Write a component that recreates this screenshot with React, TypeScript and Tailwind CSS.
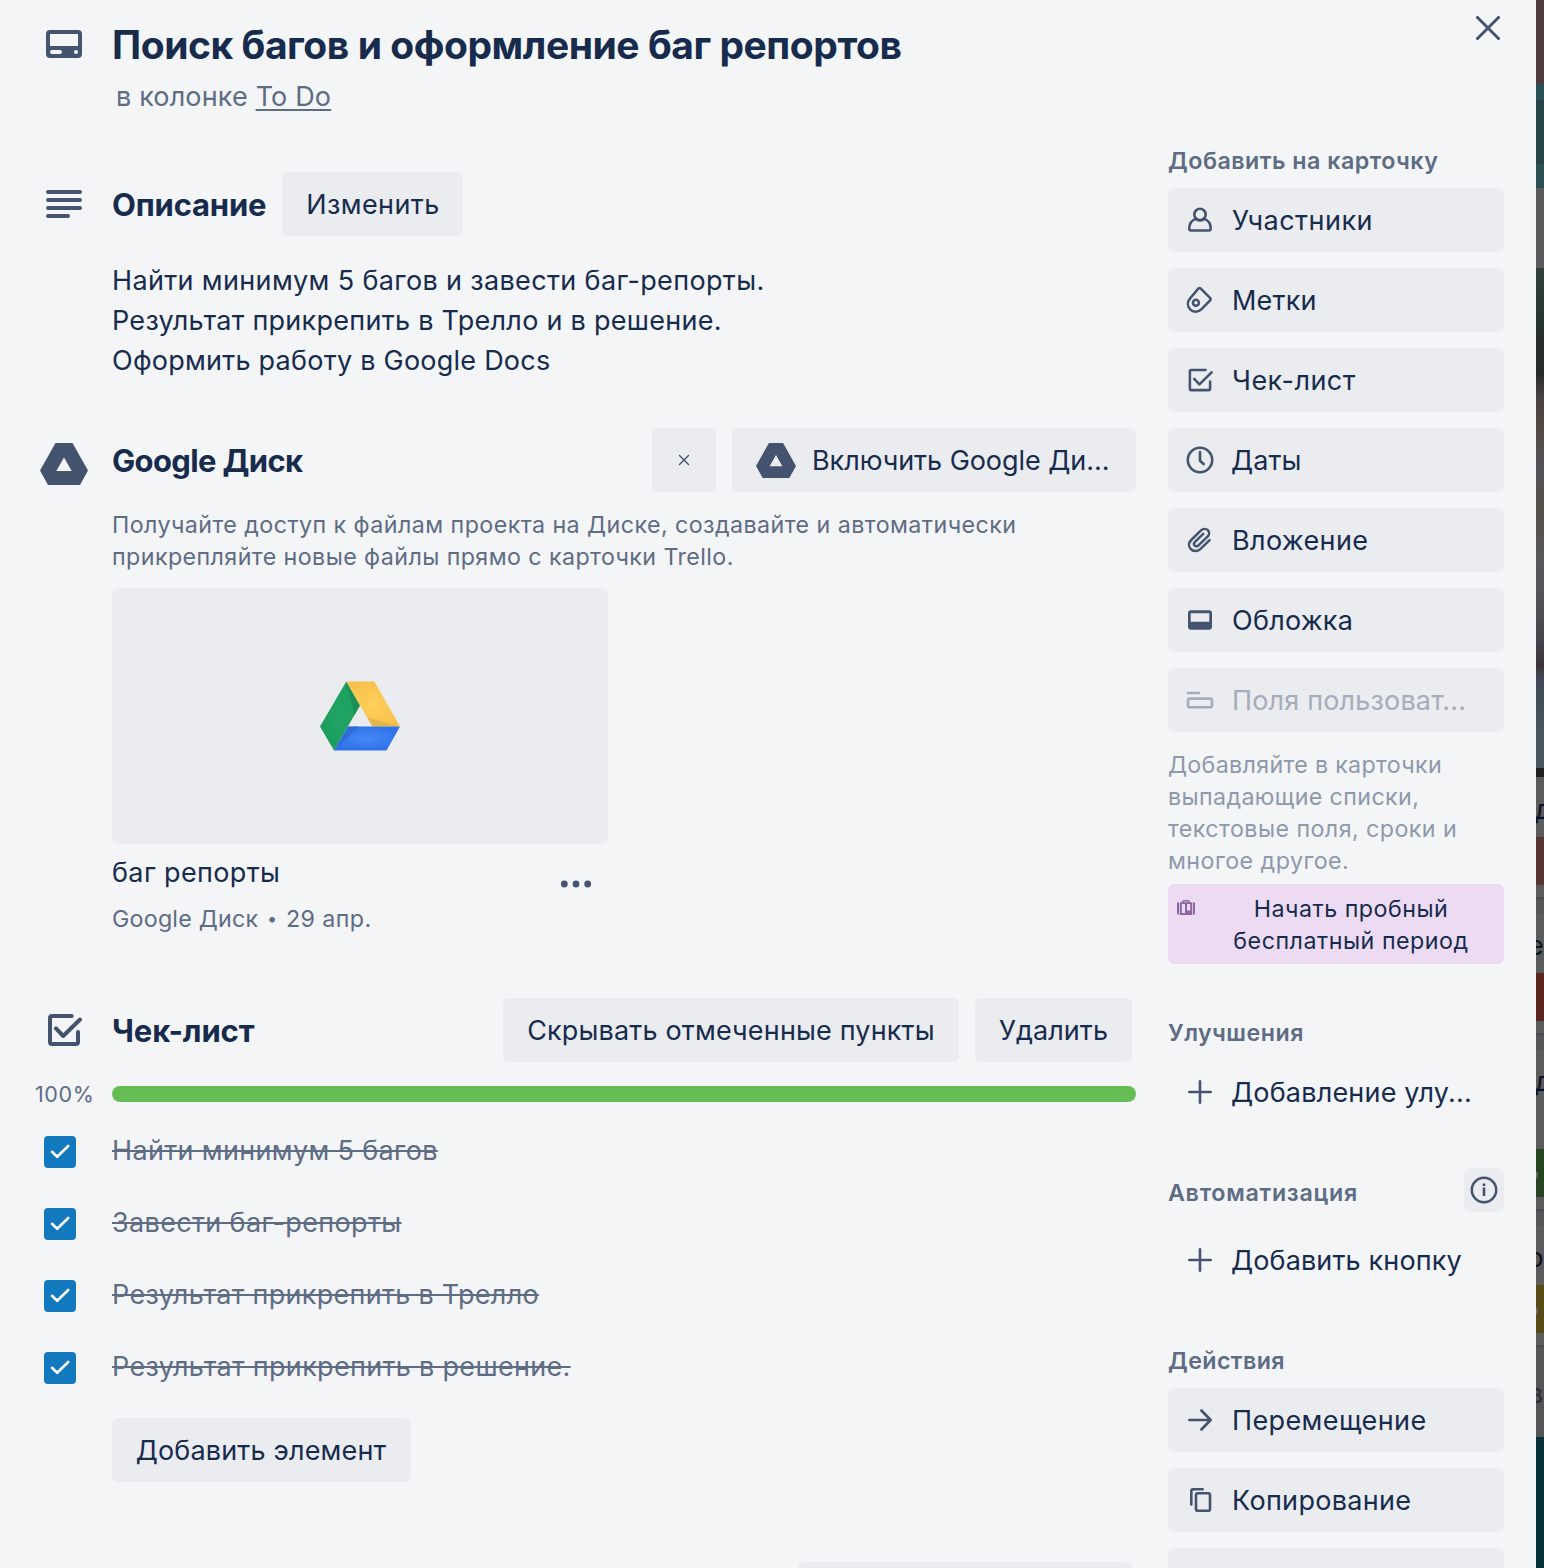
import type { ReactNode } from "react";

const strip: { h: string; glyph?: string; pos?: string; dot?: boolean }[] = [
  { h: "h-[84px] bg-[#503c3f]" },
  { h: "h-[16px] bg-[#2a5056]" },
  { h: "h-[64px] bg-[#24444a]" },
  { h: "h-[24px] bg-[#2a5053]" },
  { h: "h-[80px] bg-[#5a5a5c]" },
  { h: "h-[500px] bg-[linear-gradient(180deg,#33403a_0px,#283833_40px,#272f2e_70px,#262b2a_105px,#4a4240_130px,#524844_160px,#55535a_200px,#54504a_240px,#58575a_290px,#535156_340px,#43424a_375px,#3c3539_398px,#3f4854_410px,#4a5562_460px,#4b5663_500px)]" },
  { h: "h-[9px] bg-[#202020]" },
  { h: "h-[60px] bg-[#5b5b5b]", glyph: "д", pos: "-left-px top-[13px]" },
  { h: "h-[48px] bg-[#583532]" },
  { h: "h-[12px] bg-[#5b5b5b]" },
  { h: "h-[2px] bg-[#48494d]" },
  { h: "h-[14px] bg-[#555558]" },
  { h: "h-[60px] bg-[#5b5b5b]", glyph: "е", pos: "-left-[8px] top-[13px]" },
  { h: "h-[48px] bg-[#58241b]" },
  { h: "h-[12px] bg-[#5b5b5b]" },
  { h: "h-[2px] bg-[#48494d]" },
  { h: "h-[14px] bg-[#555558]" },
  { h: "h-[100px] bg-[#5b5b5b]", glyph: "д", pos: "-left-px top-[13px]" },
  { h: "h-[48px] bg-[#24451f]", dot: true },
  { h: "h-[12px] bg-[#5b5b5b]" },
  { h: "h-[2px] bg-[#48494d]" },
  { h: "h-[14px] bg-[#555558]" },
  { h: "h-[60px] bg-[#5b5b5b]", glyph: "р", pos: "-left-[9px] top-[13px]" },
  { h: "h-[48px] bg-[#594b15]", dot: true },
  { h: "h-[12px] bg-[#5b5b5b]" },
  { h: "h-[2px] bg-[#48494d]" },
  { h: "h-[90px] bg-[#555558]", glyph: "в", pos: "-left-[8px] top-[27px] opacity-60" },
  { h: "h-[131px] bg-[#06303a]" },
];

function BoardEdge() {
  return (
    <div className="flex w-2 flex-col overflow-hidden">
      {strip.map((s, i) => (
        <div key={i} className={`relative shrink-0 overflow-hidden ${s.h}`}>
          {s.glyph && (
            <span className={`absolute text-[27px] leading-[40px] text-[#0c1424] ${s.pos}`}>{s.glyph}</span>
          )}
          {s.dot && <span className="absolute -left-2 top-[21px] h-[10px] w-[10px] rounded-full bg-[#696b6b]" />}
        </div>
      ))}
    </div>
  );
}

const S = { fill: "none", stroke: "currentColor", strokeLinecap: "round", strokeLinejoin: "round" } as const;

function Svg({ size, className = "", children }: { size: number; className?: string; children: ReactNode }) {
  return (
    <svg width={size} height={size} viewBox={`0 0 ${size} ${size}`} className={`block shrink-0 ${className}`}>
      {children}
    </svg>
  );
}

const CardIcon = () => (
  <svg width="36" height="28" viewBox="0 0 36 28" fill="currentColor">
    <path
      fillRule="evenodd"
      d="M4 0h28a4 4 0 0 1 4 4v20a4 4 0 0 1-4 4H4a4 4 0 0 1-4-4V4a4 4 0 0 1 4-4zM4 4v12h28V4zM6 20a2 2 0 0 0 0 4h8a2 2 0 0 0 0-4zM30 20a2 2 0 1 0 0 4a2 2 0 1 0 0-4z"
    />
  </svg>
);
const LinesIcon = () => (
  <svg width="36" height="28" viewBox="0 0 36 28" fill="currentColor">
    <rect width="36" height="4" rx="2" />
    <rect y="8" width="36" height="4" rx="2" />
    <rect y="16" width="36" height="4" rx="2" />
    <rect y="24" width="24" height="4" rx="2" />
  </svg>
);
const DriveMono = ({ w, h }: { w: number; h: number }) => (
  <svg width={w} height={h} viewBox="0 0 48 42" className="block shrink-0" fill="currentColor">
    <path fillRule="evenodd" d="M15.5 0h17L48 27.5 40 42H8L0 27.5zM24 14.5 16.3 28h15.4z" />
  </svg>
);
const CheckSquare = ({ size, weight = 4 }: { size: number; weight?: number }) => (
  <svg width={size} height={size} viewBox="0 0 36 36" className="block shrink-0" {...S} strokeWidth={weight}>
    <path d="M25.7 4H6a2 2 0 0 0-2 2v24a2 2 0 0 0 2 2h24a2 2 0 0 0 2-2V20" />
    <path d="M10 16.4 17.2 24 34 7.5" />
  </svg>
);

const Member = () => (
  <Svg size={32}>
    <g {...S} strokeWidth="2.6">
      <circle cx="16" cy="10.5" r="5.7" />
      <path d="M11.6 14.9C8 16.2 5.4 19.5 5.3 24.6q0 1.9 1.9 1.9h17.6q1.9 0 1.9-1.9c-.1-5.1-2.7-8.4-6.3-9.7" />
      <path d="M11.6 14.9Q16 17.8 20.4 14.9" />
    </g>
  </Svg>
);
const Label = () => (
  <Svg size={32}>
    <g {...S} strokeWidth="2.5">
      <path d="M14.3 4.6q1.3-1 2.5.1l9.2 9.2q1.2 1.3 0 2.6L17.3 25.3c-3.6 3.5-8.4 2.9-11.200.1-2.900-3.100-2.800-7.600 0-11z" />
      <circle cx="11.9" cy="18.7" r="3" />
    </g>
  </Svg>
);
const Clock = () => (
  <Svg size={32}>
    <g {...S} strokeWidth="2.6">
      <circle cx="16" cy="16" r="12.2" />
      <path d="M16 8v8.700l3.600 3.300" />
    </g>
  </Svg>
);
const Clip = () => (
  <Svg size={32}>
    <path
      {...S}
      strokeWidth="2.5"
      d="M25.600 16.200 16.300 25.100c-3 2.700-7.200 2.400-9.500 0-2.500-2.600-2.300-6.400.4-9.100l9.800-9.600c2.200-2.100 5.200-1.900 6.900-.2 1.700 1.800 1.600 4.600-.4 6.500l-9 8.700c-1.200 1.200-2.800 1.200-3.800.2-1-1.100-.9-2.600.3-3.800l8.200-7.900"
    />
  </Svg>
);
const Cover = () => (
  <Svg size={32}>
    <path fill="currentColor" fillRule="evenodd" d="M7 6.300h18a3 3 0 0 1 3 3v13.400a3 3 0 0 1-3 3H7a3 3 0 0 1-3-3V9.300a3 3 0 0 1 3-3zM6.700 9.300v8.400h18.600V9.300z" />
  </Svg>
);
const Fields = () => (
  <Svg size={32}>
    <g {...S} strokeWidth="2.6">
      <path d="M4 9h11" />
      <rect x="4" y="14.6" width="24" height="8.6" rx="1.8" />
    </g>
  </Svg>
);
const Plus = () => (
  <Svg size={32}>
    <path {...S} strokeWidth="2.6" d="M16 5.300v21.400M5.300 16h21.400" />
  </Svg>
);
const Arrow = () => (
  <Svg size={32}>
    <path {...S} strokeWidth="2.6" d="M5.300 16h21M17.400 6.500l9.300 9.500-9.300 9.500" />
  </Svg>
);
const Copy = () => (
  <Svg size={32}>
    <g {...S} strokeWidth="2.6">
      <path d="M18.700 5.300H9.300a2 2 0 0 0-2 2V20.500" />
      <rect x="12" y="9.3" width="14" height="17.4" rx="1.8" />
    </g>
  </Svg>
);
const Suitcase = () => (
  <svg width="18" height="15" viewBox="0 0 18 15" fill="#8c66a3">
    <path d="M2 2.400v12.400A1.800 1.800 0 0 1 0 13V4a1.600 1.600 0 0 1 2-1.600zM16 2.400v12.400A1.800 1.800 0 0 0 18 13V4a1.600 1.600 0 0 0-2-1.600z" />
    <path fillRule="evenodd" d="M5 2.200V2a2 2 0 0 1 2-2h4a2 2 0 0 1 2 2v.2h2.200V15H2.800V2.200zM6.600 1.400v.8h4.800v-.8zM4.800 4v9h3.200V4zM10 4v6.600h3.200V4z" />
  </svg>
);

function DriveColor() {
  return (
    <svg width="80" height="70" viewBox="0 0 80 70">
      <defs>
        <radialGradient id="dg" cx="0.55" cy="0.5" r="0.6">
          <stop offset="0" stopColor="#23a566" />
          <stop offset="1" stopColor="#1a9c5b" />
        </radialGradient>
        <radialGradient id="dy" cx="0.5" cy="0.5" r="0.6">
          <stop offset="0" stopColor="#ffd05a" />
          <stop offset="1" stopColor="#f5c04a" />
        </radialGradient>
        <radialGradient id="db" cx="0.5" cy="0.5" r="0.5">
          <stop offset="0" stopColor="#4688f8" />
          <stop offset="1" stopColor="#2f74e8" />
        </radialGradient>
      </defs>
      <path d="M26.300.500 40 24.500 14 69.500 0 45.500z" fill="url(#dg)" />
      <path d="M26.300.500 40 24.500 34.500 34z" fill="#178450" opacity=".6" />
      <path d="M26.300.500H54.300L80 45.500H52.300z" fill="url(#dy)" />
      <path d="M47.300 36.500 80 45.500H52.300z" fill="#d9b04a" opacity=".7" />
      <path d="M28 45.500H80L66.500 69.500H14z" fill="url(#db)" />
      <path d="M28 45.500H39L14 69.500z" fill="#2d67cf" opacity=".7" />
    </svg>
  );
}

function SideButton({ icon, label, track, ghost = false, muted = false }: { icon: ReactNode; label: string; track: string; ghost?: boolean; muted?: boolean }) {
  return (
    <button
      className={`flex h-16 w-full items-center rounded-[6px] pl-4 text-left text-[27px] leading-10 ${ghost ? "" : "bg-[#eaecf0]"} ${muted ? "text-[#a5adba]" : "text-[#172b4d]"}`}
    >
      <span className={muted ? "text-[#a5adba]" : "text-[#44546f]"}>{icon}</span>
      <span className={`ml-4 whitespace-nowrap pt-[2px] ${track}`}>{label}</span>
    </button>
  );
}

const addItems: { icon: ReactNode; label: string; track: string }[] = [
  { icon: <Member />, label: "Участники", track: "tracking-[0.46px]" },
  { icon: <Label />, label: "Метки", track: "tracking-[0.2px]" },
  { icon: <span className="block pl-[3px] pr-[3px]"><CheckSquare size={26} weight={3.5} /></span>, label: "Чек-лист", track: "tracking-[0.48px]" },
  { icon: <Clock />, label: "Даты", track: "indent-[-1px] tracking-[0.05px]" },
  { icon: <Clip />, label: "Вложение", track: "tracking-[0.36px]" },
  { icon: <Cover />, label: "Обложка", track: "tracking-[0.25px]" },
];

const checklist = [
  { text: "Найти минимум 5 багов", track: "tracking-[0.34px]" },
  { text: "Завести баг-репорты", track: "tracking-[0.35px]" },
  { text: "Результат прикрепить в Трелло", track: "tracking-[0.28px]" },
  { text: "Результат прикрепить в решение.", track: "tracking-[0.31px]" },
];

const btn = "flex h-16 items-center justify-center whitespace-nowrap rounded-[6px] bg-[#eaecf0] text-[27px] leading-10 text-[#172b4d]";
const h3 = "pt-[2px] text-[31px] font-bold leading-10 text-[#172b4d] whitespace-nowrap";
const sideHeading = "text-[23.25px] font-semibold leading-8 text-[#5e6c84] whitespace-nowrap";

export default function App() {
  return (
    <div className="flex h-[1568px] w-[1544px] overflow-hidden bg-[#f4f5f7] font-['Inter',sans-serif] font-normal">
      <div className="flex w-[1536px]">
        <main className="w-[1136px] shrink-0">
          <header className="flex pt-[21px]">
            <div className="w-[112px] shrink-0 pl-[46px] pt-[9px] text-[#44546f]">
              <CardIcon />
            </div>
            <div>
              <h1 className="whitespace-nowrap text-[39px] font-bold leading-[48px] tracking-[-0.45px] text-[#172b4d]">
                Поиск багов и оформление баг репортов
              </h1>
              <p className="mt-[8px] whitespace-nowrap pl-[4px] text-[27px] leading-10 tracking-[0.15px] text-[#5e6c84]">
                в колонке{" "}
                <a className="underline decoration-2 underline-offset-[3px]">To Do</a>
              </p>
            </div>
          </header>

          <section className="mt-[55px]">
            <div className="flex h-16 items-center">
              <div className="w-[112px] pl-[46px] text-[#44546f]">
                <LinesIcon />
              </div>
              <h3 className={`${h3} w-[154px] tracking-[-0.18px]`}>Описание</h3>
              <button className={`${btn} ml-[16px] w-[181px] pl-px pt-[2px] tracking-[0.4px]`}>Изменить</button>
            </div>
            <div className="ml-[112px] mt-[25px] text-[27px] leading-10 text-[#172b4d]">
              <p className="tracking-[0.35px]">Найти минимум 5 багов и завести баг-репорты.</p>
              <p className="tracking-[0.27px]">Результат прикрепить в Трелло и в решение.</p>
              <p className="tracking-[0.24px]">Оформить работу в Google Docs</p>
            </div>
          </section>

          <section className="mt-[47px]">
            <div className="flex h-16 items-center">
              <div className="w-[112px] pl-[40px] pt-[8px] text-[#44546f]">
                <DriveMono w={48} h={42} />
              </div>
              <h3 className={`${h3} flex-1 tracking-[-0.65px]`}>Google Диск</h3>
              <button className={`${btn} w-16`}>
                <svg width="12" height="12" viewBox="0 0 12 12" className="text-[#44546f]">
                  <path {...S} strokeWidth="1.4" d="M1.500 1.500l9 9M10.500 1.500l-9 9" />
                </svg>
              </button>
              <button className={`${btn} ml-4 w-[404px] !justify-start pl-6 tracking-[-0.05px]`}>
                <span className="text-[#44546f]">
                  <DriveMono w={40} h={35} />
                </span>
                <span className="ml-4 pt-[2px]">Включить Google Ди...</span>
              </button>
            </div>
            <div className="ml-[112px] mt-[17px] whitespace-nowrap text-[23.25px] leading-8 text-[#5e6c84]">
              <p className="tracking-[0.43px]">Получайте доступ к файлам проекта на Диске, создавайте и автоматически</p>
              <p className="tracking-[0.41px]">прикрепляйте новые файлы прямо с карточки Trello.</p>
            </div>
            <div className="ml-[112px] mt-[15px] w-[496px]">
              <div className="flex h-[256px] items-center justify-center rounded-[6px] bg-[#eaecf0]">
                <DriveColor />
              </div>
              <div className="flex h-[92px] justify-between">
                <div className="pt-[9px]">
                  <p className="text-[27px] leading-10 tracking-[0.37px] text-[#172b4d]">баг репорты</p>
                  <p className="mt-[10px] flex text-[23.25px] leading-8 text-[#5e6c84]">
                    <span className="w-[155px] tracking-[0.22px]">Google Диск</span>
                    <span className="w-[19px] text-[18px]">•</span>
                    <span className="tracking-[0.38px]">29 апр.</span>
                  </p>
                </div>
                <svg width="32" height="8" viewBox="0 0 32 8" className="mr-4 mt-[36px] text-[#44546f]" fill="currentColor">
                  <circle cx="4.3" cy="4" r="3.4" />
                  <circle cx="16" cy="4" r="3.4" />
                  <circle cx="27.7" cy="4" r="3.4" />
                </svg>
              </div>
            </div>
          </section>

          <section className="mt-[62px]">
            <div className="flex h-16 items-center pr-1">
              <div className="w-[112px] pl-[46px] text-[#44546f]">
                <CheckSquare size={36} />
              </div>
              <h3 className={`${h3} flex-1 tracking-[-0.1px]`}>Чек-лист</h3>
              <button className={`${btn} w-[456px] pt-[2px] tracking-[0.16px]`}>Скрывать отмеченные пункты</button>
              <button className={`${btn} ml-4 w-[157px] pt-[2px] tracking-[0.06px]`}>Удалить</button>
            </div>
            <div className="mt-4 flex h-8 items-center">
              <span className="ml-[35px] w-[77px] text-[21.5px] leading-8 tracking-[0.6px] text-[#5e6c84]">100%</span>
              <div className="h-4 flex-1 rounded-full bg-[#66bd55]" />
            </div>
            <ul className="mt-[20px]">
              {checklist.map((c) => (
                <li key={c.text} className="flex h-[72px] items-start">
                  <span className="ml-[44px] mt-[6px] flex h-8 w-8 items-center justify-center rounded-[4px] bg-[#1279be] text-white">
                    <svg width="32" height="32" viewBox="0 0 32 32">
                      <path {...S} strokeWidth="2.6" d="M8 15.800 13.200 20.800 24.200 10" />
                    </svg>
                  </span>
                  <span className={`ml-9 mt-px text-[27px] leading-10 text-[#5e6c84] line-through decoration-2 ${c.track}`}>{c.text}</span>
                </li>
              ))}
            </ul>
            <button className={`${btn} ml-[112px] w-[299px] pr-px pt-[2px] tracking-[0.17px]`}>Добавить элемент</button>
            <div className="ml-[798px] mt-[80px] h-16 w-[334px] rounded-[6px] bg-[#eaecf0]" />
          </section>
        </main>

        <aside className="ml-8 w-[336px] shrink-0">
          <div className="flex h-[145px] justify-end pr-1 pt-[16px] text-[#44546f]">
            <svg width="24" height="24" viewBox="0 0 24 24">
              <path {...S} strokeWidth="3" d="M1.500 1.500l21 21M22.500 1.500l-21 21" />
            </svg>
          </div>
          <h4 className={`${sideHeading} tracking-[0.48px]`}>Добавить на карточку</h4>
          <div className="mt-[11px] flex flex-col gap-4">
            {addItems.map((a) => (
              <SideButton key={a.label} {...a} />
            ))}
            <SideButton icon={<Fields />} label="Поля пользоват..." track="tracking-[0.17px]" muted />
          </div>
          <div className="mt-[17px] whitespace-nowrap text-[23.25px] leading-8 text-[#8e99ab]">
            <p className="tracking-[0.31px]">Добавляйте в карточки</p>
            <p className="tracking-[0.37px]">выпадающие списки,</p>
            <p className="tracking-[0.43px]">текстовые поля, сроки и</p>
            <p className="tracking-[0.46px]">многое другое.</p>
          </div>
          <button className="mt-[7px] flex h-20 w-full rounded-[6px] bg-[#eddbf4] pt-[9px] text-[23.25px] leading-8 text-[#172b4d]">
            <span className="ml-[9px] mt-[7px] w-[18px]">
              <Suitcase />
            </span>
            <span className="ml-[3px] flex-1 whitespace-nowrap text-center">
              <span className="block tracking-[0.48px]">Начать пробный</span>
              <span className="block tracking-[0.5px]">бесплатный период</span>
            </span>
          </button>

          <h4 className={`${sideHeading} mt-[53px] tracking-[0.5px]`}>Улучшения</h4>
          <div className="mt-[11px]">
            <SideButton icon={<Plus />} label="Добавление улу..." track="indent-[-1px] tracking-[0.19px]" ghost />
          </div>

          <div className="mt-[44px] flex h-11 items-center justify-between">
            <h4 className={`${sideHeading} mt-[6px] tracking-[0.7px]`}>Автоматизация</h4>
            <button className="flex h-11 w-10 items-center justify-center rounded-[6px] bg-[#eaecf0] text-[#44546f]">
              <Svg size={32}>
                <circle cx="16" cy="16" r="12.2" {...S} strokeWidth="2.5" />
                <path {...S} strokeLinecap="butt" strokeWidth="2.6" d="M16 13.500v8.500" />
                <circle cx="16" cy="10.7" r="1.5" fill="currentColor" />
              </Svg>
            </button>
          </div>
          <div className="mt-[16px]">
            <SideButton icon={<Plus />} label="Добавить кнопку" track="indent-[-1px] tracking-[0.13px]" ghost />
          </div>

          <h4 className={`${sideHeading} mt-[53px] tracking-[0.38px]`}>Действия</h4>
          <div className="mt-[11px] flex flex-col gap-4">
            <SideButton icon={<Arrow />} label="Перемещение" track="tracking-[0.38px]" />
            <SideButton icon={<Copy />} label="Копирование" track="tracking-[0.32px]" />
            <div className="h-16 w-full rounded-[6px] bg-[#eaecf0]" />
          </div>
        </aside>
      </div>
      <BoardEdge />
    </div>
  );
}
